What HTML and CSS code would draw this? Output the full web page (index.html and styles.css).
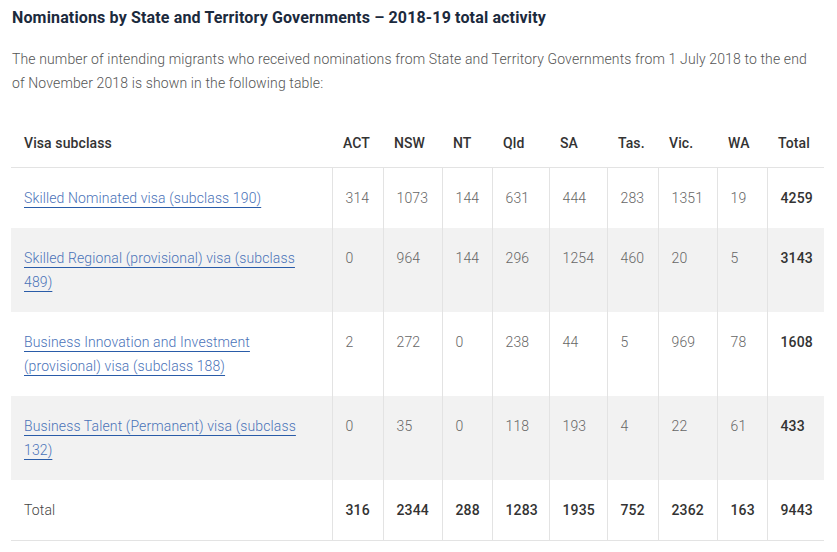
FILE: index.html
```html
<!DOCTYPE html>
<html lang="en">
<head>
<meta charset="utf-8">
<title>Nominations by State and Territory Governments</title>
<link rel="stylesheet" href="styles.css">
</head>
<body>
<main class="page">
  <h2 class="title">Nominations by State and Territory Governments – 2018-19 total activity</h2>
  <p class="intro">The number of intending migrants who received nominations from State and Territory Governments from 1 July 2018 to the end of November 2018 is shown in the following table:</p>
  <table class="data">
    <colgroup>
      <col class="c-visa">
      <col class="c-act">
      <col class="c-nsw">
      <col class="c-nt">
      <col class="c-qld">
      <col class="c-sa">
      <col class="c-tas">
      <col class="c-vic">
      <col class="c-wa">
      <col class="c-total">
    </colgroup>
    <thead>
      <tr>
        <th>Visa subclass</th><th>ACT</th><th>NSW</th><th>NT</th><th>Qld</th><th>SA</th><th>Tas.</th><th>Vic.</th><th>WA</th><th>Total</th>
      </tr>
    </thead>
    <tbody>
      <tr>
        <td><a href="#">Skilled Nominated visa (subclass 190)</a></td>
        <td>314</td><td>1073</td><td>144</td><td>631</td><td>444</td><td>283</td><td>1351</td><td>19</td><td class="strong">4259</td>
      </tr>
      <tr class="alt">
        <td><a href="#">Skilled Regional (provisional) visa (subclass 489)</a></td>
        <td>0</td><td>964</td><td>144</td><td>296</td><td>1254</td><td>460</td><td>20</td><td>5</td><td class="strong">3143</td>
      </tr>
      <tr>
        <td><a href="#">Business Innovation and Investment (provisional) visa (subclass 188)</a></td>
        <td>2</td><td>272</td><td>0</td><td>238</td><td>44</td><td>5</td><td>969</td><td>78</td><td class="strong">1608</td>
      </tr>
      <tr class="alt">
        <td><a href="#">Business Talent (Permanent) visa (subclass 132)</a></td>
        <td>0</td><td>35</td><td>0</td><td>118</td><td>193</td><td>4</td><td>22</td><td>61</td><td class="strong">433</td>
      </tr>
      <tr class="total-row">
        <td>Total</td>
        <td class="strong">316</td><td class="strong">2344</td><td class="strong">288</td><td class="strong">1283</td><td class="strong">1935</td><td class="strong">752</td><td class="strong">2362</td><td class="strong">163</td><td class="strong">9443</td>
      </tr>
    </tbody>
  </table>
</main>
</body>
</html>
```

FILE: styles.css
```css
html, body {
  margin: 0;
  padding: 0;
  background: #ffffff;
}

body {
  font-family: Roboto, "Liberation Sans", Arial, sans-serif;
  color: #555555;
}

.page {
  padding: 6px 13px 0 11px;
}

.title {
  margin: 0 0 0 1px;
  font-size: 16px;
  line-height: 24px;
  font-weight: 700;
  letter-spacing: 0.15px;
  color: #1b2a3d;
}

.intro {
  margin: 17px 14px 0 1px;
  font-size: 14px;
  line-height: 24px;
  font-weight: 300;
  letter-spacing: 0.13px;
  color: #555555;
}

.data {
  margin-top: 24px;
  width: 813px;
  table-layout: fixed;
  border-collapse: collapse;
  font-size: 14px;
  line-height: 24px;
}

.c-visa { width: 321px; }
.c-act { width: 51px; }
.c-nsw { width: 59px; }
.c-nt { width: 50px; }
.c-qld { width: 57px; }
.c-sa { width: 58px; }
.c-tas { width: 51px; }
.c-vic { width: 59px; }
.c-wa { width: 50px; }
.c-total { width: 57px; }

.data th {
  text-align: left;
  font-weight: 500;
  letter-spacing: 0.1px;
  color: #333333;
  padding: 12px 0 12px 11px;
  border-bottom: 1px solid #e3e3e3;
}

.data th:first-child {
  padding-left: 13px;
}

.data td {
  vertical-align: top;
  text-align: left;
  padding: 18px 0 18px 13px;
  font-weight: 300;
  letter-spacing: 0.12px;
  color: #666666;
  border-left: 1px solid #e3e3e3;
}

.data td:first-child {
  border-left: none;
  padding-right: 20px;
}

.data tr.alt td {
  background: #f2f2f2;
}

.data td.strong {
  font-weight: 500;
  color: #333333;
}

.data tr.total-row td {
  border-bottom: 1px solid #e3e3e3;
}

.data tr.total-row td:first-child {
  color: #444444;
}

.data a {
  color: #4a72b8;
  text-decoration: underline;
  text-decoration-color: #2a5ca8;
  text-decoration-thickness: 1px;
  text-underline-offset: 4px;
}
```
